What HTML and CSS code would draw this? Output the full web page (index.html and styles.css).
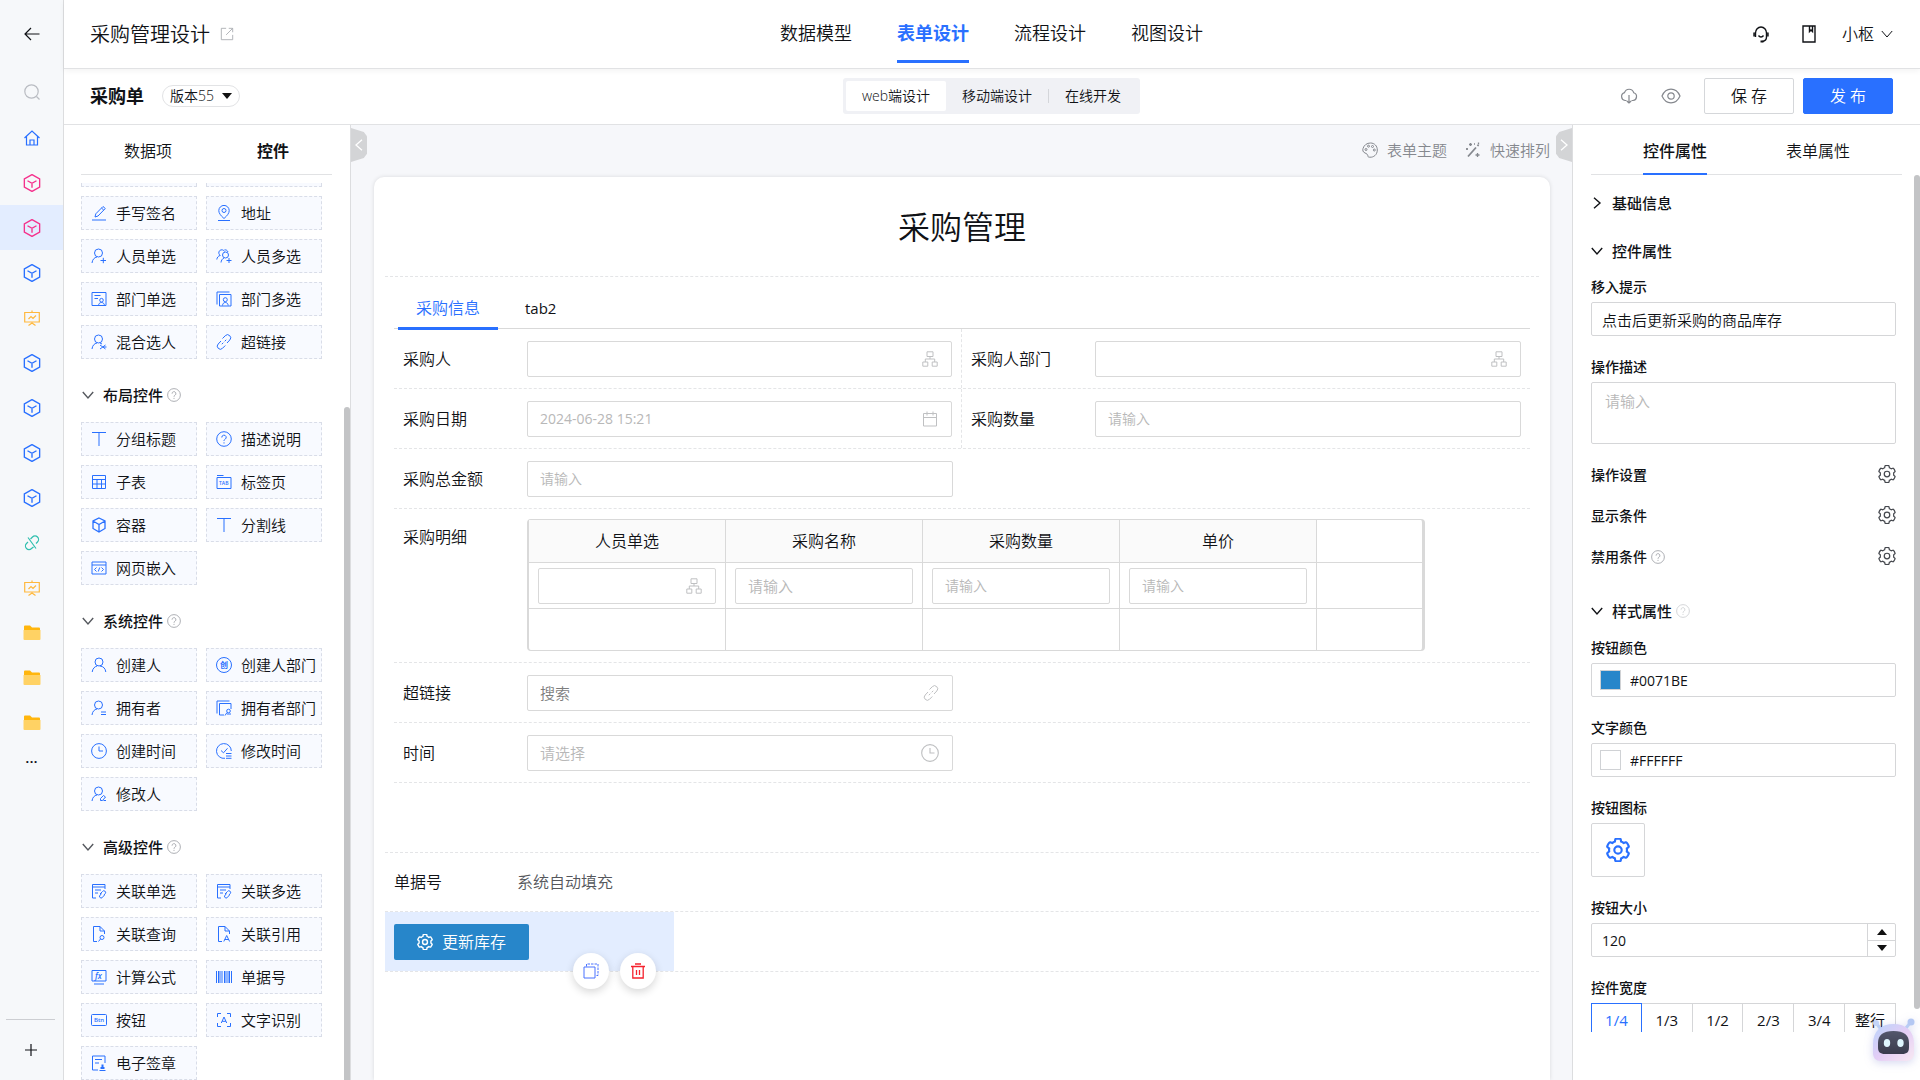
FILE: index.html
```html
<!DOCTYPE html>
<html lang="zh-CN">
<head>
<meta charset="utf-8">
<title>采购管理设计</title>
<link rel="stylesheet" href="styles.css">
</head>
<body>
<svg class="sprite" aria-hidden="true">
  <symbol id="back" viewBox="0 0 16 16"><path d="M15.5 8H1M7 2 1 8l6 6"/></symbol>
  <symbol id="search" viewBox="0 0 16 16"><circle cx="7.5" cy="7.5" r="6.7"/><path d="m12.5 12.5 3 3"/></symbol>
  <symbol id="home" viewBox="0 0 16 16"><path d="M.5 8 8 1l7.500 7M2.500 6.500v8.500h11V6.500M6 15v-5h4v5"/></symbol>
  <symbol id="cube" viewBox="0 0 16 16"><path d="m8 .5 6.800 3.800v7.400L8 15.500l-6.800-3.800V4.300zM4 6l4 2.300L12 6M8 8.300v4"/></symbol>
  <symbol id="board" viewBox="0 0 16 16"><path d="M.7 2.500h14.600v9.500H.7zM8 .5v2M8 12v2M4.500 15.500 8 13l3.500 2.500M4.500 9 7 6.500 9 8.500l3-3"/></symbol>
  <symbol id="unlink" viewBox="0 0 16 16"><path d="M6.500 4 8.500 2a3.400 3.400 0 0 1 5 5L12 8.500M4 7 2.500 8.500a3.400 3.400 0 0 0 5 5L9.500 12M4 2.500l8 11"/></symbol>
  <symbol id="folder" viewBox="0 0 18 16"><path fill="#ffb60d" stroke="none" d="M1 1.500a1 1 0 0 1 1-1h5l2 2h7a1 1 0 0 1 1 1V8H1z"/><path fill="#ffd264" stroke="none" d="M.500 5h17v9a1 1 0 0 1-1 1h-15a1 1 0 0 1-1-1z"/></symbol>
  <symbol id="plus" viewBox="0 0 16 16"><path d="M8 2v12M2 8h12"/></symbol>
  <symbol id="external" viewBox="0 0 16 16"><path d="M7 1.500H1.500v13h13V9M10 1.500h4.500V6M14.500 1.500 7 9"/></symbol>
  <symbol id="headset" viewBox="0 0 18 18"><path d="M3.500 8a5.500 6 0 0 1 11 0M2 7.500v4M16 7.500v4M3.500 7v5M14.500 7v5c0 2.500-1.500 4-4 4.500M6.500 10.500c1.300 2 3.700 2 5 0" /><path d="M8.500 16.500h3" stroke-width="2"/></symbol>
  <symbol id="book" viewBox="0 0 16 18"><path d="M2 1h12v16H2zM8.500 1v5.500l1.500-1.500 1.500 1.500V1"/></symbol>
  <symbol id="down" viewBox="0 0 12 12"><path d="m.8 3 5.200 6 5.200-6"/></symbol>
  <symbol id="right" viewBox="0 0 12 12"><path d="m3 .8 6 5.200-6 5.200"/></symbol>
  <symbol id="left" viewBox="0 0 12 12"><path d="M9 .8 3 6l6 5.200"/></symbol>
  <symbol id="cloud" viewBox="0 0 18 16"><path d="M6.500 12.500H5a4 4 0 0 1-.500-7.800 4.800 4.800 0 0 1 9.200 0 4 4 0 0 1-.7 7.800h-1.500M9 7v8M6.800 13 9 15l2.200-2"/></symbol>
  <symbol id="eye" viewBox="0 0 20 16"><path d="M1 8c2-4.500 5.300-6.800 9-6.800S17 3.500 19 8c-2 4.500-5.300 6.800-9 6.800S3 12.500 1 8z"/><circle cx="10" cy="8" r="3.200"/></symbol>
  <symbol id="palette" viewBox="0 0 16 16"><path d="M6 14.500c0-2-1.500-3-3-3.500C.800 10 .500 8.300 1 6.500 2 3 5 1 8.500 1c4 0 6.800 3 6.800 7 0 5-4 7.500-7.300 7.200-1.200 0-2-.2-2-.7z"/><circle cx="4" cy="7.500" r="1"/><circle cx="6.500" cy="4.200" r="1"/><circle cx="10.500" cy="4.500" r="1"/><circle cx="12.300" cy="8" r="1"/></symbol>
  <symbol id="wand" viewBox="0 0 16 16"><path d="m3 14.500 8-9M12.500 4l1-1.200" stroke-width="1.800"/><path d="M5.500 1v3M4 2.500h3M13.500.500v2M2 6v2M1 7h2M12.500 11v4M10.500 13h4M9 2h1" stroke-width="1.300"/></symbol>
  <symbol id="help" viewBox="0 0 16 16"><circle cx="8" cy="8" r="7.300"/><path d="M5.800 6.500a2.200 2.200 0 1 1 3.400 1.700C8.300 8.800 8 9 8 10M8 11.300v1.200"/></symbol>
  <symbol id="pen" viewBox="0 0 16 16"><path d="M1 15h14M4 12l.8-3.200L12 1.500l2.300 2L7 11zM10.500 3l2.300 2.200"/></symbol>
  <symbol id="pin" viewBox="0 0 16 16"><path d="M2 15.500h12M8 13.500C4.500 10.500 2.800 8 2.800 5.600a5.200 5.200 0 0 1 10.400 0C13.200 8 11.500 10.500 8 13.500z"/><circle cx="8" cy="5.500" r="2"/></symbol>
  <symbol id="user" viewBox="0 0 16 16"><circle cx="8" cy="5" r="4"/><path d="M1.200 15c.4-3.500 2.500-5.500 5-6M9 9c3.500.4 5.400 2.500 5.800 6"/></symbol>
  <symbol id="user-half" viewBox="0 0 16 16"><circle cx="7.500" cy="5" r="4"/><path d="M1 15c.4-3.500 2.300-5.500 5-6"/></symbol>
  <symbol id="user-plus" viewBox="0 0 16 16"><use href="#user-half"/><path d="M9.500 12.500h5.500M12.300 9.800v5.400"/></symbol>
  <symbol id="user-x" viewBox="0 0 16 16"><use href="#user-half"/><path d="m9 11 5.500 4M9 15l5.500-4M9 9l2 1M13 13h2.500"/></symbol>
  <symbol id="user-eq" viewBox="0 0 16 16"><use href="#user-half"/><path d="M10 12h5M10 14.500h5"/></symbol>
  <symbol id="user-edit" viewBox="0 0 16 16"><use href="#user-half"/><path d="m9.500 12.500 3-3 2 1.500-3 3.500h-2zM12.500 14.500h2.500"/></symbol>
  <symbol id="users" viewBox="0 0 16 16"><circle cx="9.500" cy="7" r="3"/><path d="M4.500 7.500a3 3 0 1 1 4-4M.8 11.500c.2-2 1.500-3.500 3.200-4M5 14.500c.2-2 1.200-3.700 3-4.500M8.500 1.800c2 0 3 .7 3.500 2.200M10.500 12.500h5M13 10v5"/></symbol>
  <symbol id="dept" viewBox="0 0 16 16"><path d="M1 1.500h14v13H1zM3.500 4.500h6M3.500 7.500h3.500M7.500 14.500c.2-2 1.300-3 3-3s2.800 1 3 3"/><circle cx="10.500" cy="9.200" r="1.800"/></symbol>
  <symbol id="depts" viewBox="0 0 16 16"><path d="M3.500 3.500H15v11.500H3.500zM1 13.500V1h12.500M6.500 14.500c.2-2 1.200-3 2.800-3s2.700 1 2.900 3"/><circle cx="9.300" cy="8.700" r="2"/></symbol>
  <symbol id="owner-dept" viewBox="0 0 16 16"><path d="M15 9V3.500H3.500V15H8M1 13.500V1h12.500M9 15.500l2-3M11 14h4"/><circle cx="12.500" cy="11" r="1.800"/></symbol>
  <symbol id="link" viewBox="0 0 16 16"><path d="m6.500 4.500 2.800-2.800a3 3 0 0 1 4.500 4.300L11 9M5 7 2.200 10a3 3 0 0 0 4.300 4.300L9.300 11.500M5.800 10.200l1.500-1.500M8.700 7.300l1.500-1.500"/></symbol>
  <symbol id="tee" viewBox="0 0 16 16"><path d="M1 1.500h14M8 1.500V15"/></symbol>
  <symbol id="grid" viewBox="0 0 16 16"><path d="M1.500 1.500h13v13h-13zM1.500 5.500h13M1.500 10h13M6 5.500v9M10.500 5.500v9"/></symbol>
  <symbol id="tab" viewBox="0 0 16 16"><path d="M1 3.500h14v11H1zM1 1.500h6.500"/><text x="3" y="11" font-size="5">TAB</text></symbol>
  <symbol id="box" viewBox="0 0 16 16"><path d="m8 1 6 3v7.500l-6 3.500-6-3.500V4zM2 4l6 3.500L14 4M8 7.500V15" stroke-width="1.300"/></symbol>
  <symbol id="web" viewBox="0 0 16 16"><path d="M1 2h14v12H1zM1 5h14M5.500 7.500l-2 2 2 2M10.500 7.500l2 2-2 2M8.700 7.500l-1.400 4"/></symbol>
  <symbol id="stamp" viewBox="0 0 16 16"><circle cx="8" cy="8" r="7.500"/><text x="4" y="11" font-size="8">创</text></symbol>
  <symbol id="clock" viewBox="0 0 16 16"><circle cx="8" cy="8" r="7.400"/><path d="M8 3.500V8h4"/></symbol>
  <symbol id="clock-edit" viewBox="0 0 16 16"><path d="M9 15.300A7.400 7.400 0 1 1 15.300 8M5 7.500l2.500 2.300 4-4.500M10 10.500h5.500M10 13h5.500M10 15.300h5.500"/></symbol>
  <symbol id="relate" viewBox="0 0 16 16"><path d="M5 15H1.500V1.500h12.500V6M1.500 4h12.500M4 7h6M4 10h3M9 11l2.500-2.500a1.700 1.700 0 0 1 2.800 2L13 12M10.500 10.500 8.500 13a1.700 1.700 0 0 0 2.500 1.800L13.500 12"/></symbol>
  <symbol id="doc-find" viewBox="0 0 16 16"><path d="M6 15.500H2.500v-15H9l4.500 4.500v3M9 .500V5h4.500M7.500 15.500l2-2.500"/><circle cx="11" cy="11.500" r="2"/></symbol>
  <symbol id="doc-a" viewBox="0 0 16 16"><path d="M6 15.500H2.500v-15H9l4.500 4.500v3M9 .500V5h4.500M7.800 15.500l2.900-6 2.900 6M8.700 13.500h4"/></symbol>
  <symbol id="formula" viewBox="0 0 16 16"><path d="M1 1.500h14v10.500H1zM3 15h10"/><text x="4" y="9.500" font-size="8" font-style="italic">fx</text></symbol>
  <symbol id="barcode" viewBox="0 0 16 16"><path d="M.5 2v12M2.500 2v12M4 2v12M6 2v12M8.500 2v12M10 2v12M12 2v12M13.500 2v12M15.500 2v12"/></symbol>
  <symbol id="btn" viewBox="0 0 16 16"><rect x=".5" y="2.500" width="15" height="11" rx="1"/><text x="3" y="10" font-size="6">Btn</text></symbol>
  <symbol id="ocr" viewBox="0 0 16 16"><path d="M1.500 5V1.500H5M11 1.500h3.500V5M14.500 11v3.500H11M5 14.500H1.500V11M5.300 11 8 5l2.700 6M6.200 9.300h3.600"/></symbol>
  <symbol id="seal" viewBox="0 0 16 16"><path d="M14 8V1H1.500v14H7M4 4.500h7M4 8h4M8.500 15.500h6"/><path d="M11.500 9.500v4M9.500 13h4" stroke-width="2"/></symbol>
  <symbol id="org" viewBox="0 0 16 16"><path d="M5 .800h6v4.700H5zM.8 11h5v4.200h-5zM10.200 11h5v4.200h-5zM8 5.500V8M3.300 11V8h9.400v3"/></symbol>
  <symbol id="calendar" viewBox="0 0 16 16"><path d="M1.500 2.500h13v12.500h-13zM1.500 6.500h13M5 .500v4M11 .500v4"/></symbol>
  <symbol id="gear" viewBox="40 40 944 944"><path d="M924.8 625.7l-65.5-56c3.100-19 4.700-38.400 4.700-57.800s-1.600-38.800-4.700-57.800l65.500-56a32 32 0 0 0 9.300-35.200l-.9-2.600a444 444 0 0 0-79.700-137.900l-1.800-2.100a32 32 0 0 0-35.100-9.500l-81.300 28.900c-30-24.600-63.500-44-99.700-57.600l-15.700-85a32 32 0 0 0-25.800-25.700l-2.700-.5c-52.100-9.400-106.900-9.400-159 0l-2.700.5a32 32 0 0 0-25.800 25.700l-15.800 85.400a352 352 0 0 0-99 57.400l-81.900-29.100a32 32 0 0 0-35.100 9.500l-1.800 2.100a446 446 0 0 0-79.700 137.900l-.9 2.600c-4.500 12.500-.8 26.500 9.300 35.200l66.300 56.600c-3.100 18.800-4.600 38-4.600 57.100 0 19.200 1.500 38.400 4.600 57.100L99 625.500a32 32 0 0 0-9.300 35.200l.9 2.600c18.100 50.400 44.900 96.900 79.700 137.900l1.800 2.100a32 32 0 0 0 35.100 9.500l81.900-29.100c29.800 24.500 63.100 43.900 99 57.400l15.800 85.400a32 32 0 0 0 25.800 25.700l2.700.5a449 449 0 0 0 159 0l2.700-.5a32 32 0 0 0 25.800-25.700l15.700-85a350 350 0 0 0 99.700-57.600l81.300 28.900a32 32 0 0 0 35.100-9.500l1.800-2.100c34.800-41.100 61.600-87.500 79.700-137.900l.9-2.600c4.500-12.300.8-26.300-9.300-35z"/><circle cx="512" cy="512" r="145"/></symbol>
  <symbol id="copy" viewBox="0 0 16 16"><path d="M1 4h11v11H1z"/><path d="M3.500 3.500V1h11.500v11.500H12.500" stroke-dasharray="2.500 1"/></symbol>
  <symbol id="trash" viewBox="0 0 16 16"><path d="M1 3.500h14M5 1h6M2.800 3.500V15h10.400V3.500M6.500 7v5M9.500 7v5" stroke-width="1.300"/></symbol>
</svg>

<div class="app">
  <nav class="rail" aria-label="应用导航">
    <a class="rail-back" href="#" aria-label="返回"><svg class="ico"><use href="#back"/></svg></a>
    <a class="rail-search" href="#" aria-label="搜索"><svg class="ico"><use href="#search"/></svg></a>
    <a class="rail-item blue" href="#" aria-label="首页"><svg class="ico"><use href="#home"/></svg></a>
    <a class="rail-item pink" href="#" aria-label="表单"><svg class="ico lg"><use href="#cube"/></svg></a>
    <a class="rail-item pink active" href="#" aria-label="采购单"><svg class="ico lg"><use href="#cube"/></svg></a>
    <a class="rail-item blue" href="#" aria-label="表单"><svg class="ico lg"><use href="#cube"/></svg></a>
    <a class="rail-item yellow" href="#" aria-label="报表"><svg class="ico"><use href="#board"/></svg></a>
    <a class="rail-item blue" href="#" aria-label="表单"><svg class="ico lg"><use href="#cube"/></svg></a>
    <a class="rail-item blue" href="#" aria-label="表单"><svg class="ico lg"><use href="#cube"/></svg></a>
    <a class="rail-item blue" href="#" aria-label="表单"><svg class="ico lg"><use href="#cube"/></svg></a>
    <a class="rail-item blue" href="#" aria-label="表单"><svg class="ico lg"><use href="#cube"/></svg></a>
    <a class="rail-item teal" href="#" aria-label="链接"><svg class="ico"><use href="#unlink"/></svg></a>
    <a class="rail-item yellow" href="#" aria-label="报表"><svg class="ico"><use href="#board"/></svg></a>
    <a class="rail-item" href="#" aria-label="文件夹"><svg class="ico lg"><use href="#folder"/></svg></a>
    <a class="rail-item" href="#" aria-label="文件夹"><svg class="ico lg"><use href="#folder"/></svg></a>
    <a class="rail-item" href="#" aria-label="文件夹"><svg class="ico lg"><use href="#folder"/></svg></a>
    <a class="rail-more" href="#">...</a>
    <button class="rail-add" aria-label="新增"><svg class="ico"><use href="#plus"/></svg></button>
  </nav>

  <div class="main">
    <header class="topbar">
      <div class="brand"><h1>采购管理设计</h1><svg class="ico sm gray"><use href="#external"/></svg></div>
      <nav class="top-tabs">
        <a href="#">数据模型</a><a href="#" class="active">表单设计</a><a href="#">流程设计</a><a href="#">视图设计</a>
      </nav>
      <div class="account">
        <svg class="ico lg bold service"><use href="#headset"/></svg>
        <svg class="ico lg bold"><use href="#book"/></svg>
        <a class="user" href="#">小枢 <svg class="ico xs"><use href="#down"/></svg></a>
      </div>
    </header>

    <div class="subbar">
      <div class="doc"><h2>采购单</h2><button class="version">版本55<i class="caret"></i></button></div>
      <div class="modes">
        <button class="active">web端设计</button><button>移动端设计</button><i></i><button>在线开发</button>
      </div>
      <div class="actions">
        <svg class="ico lg"><use href="#cloud"/></svg>
        <svg class="ico xl"><use href="#eye"/></svg>
        <button class="btn">保 存</button>
        <button class="btn primary">发 布</button>
      </div>
    </div>

    <div class="work">
      <aside class="palette">
        <div class="pane-tabs left"><a href="#">数据项</a><a href="#" class="active">控件</a></div>
        <div class="scroll">
          <div class="tails"><span></span><span></span></div>
          <div class="widgets">
            <button><svg class="ico"><use href="#pen"/></svg>手写签名</button>
            <button><svg class="ico"><use href="#pin"/></svg>地址</button>
            <button><svg class="ico"><use href="#user-plus"/></svg>人员单选</button>
            <button><svg class="ico"><use href="#users"/></svg>人员多选</button>
            <button><svg class="ico"><use href="#dept"/></svg>部门单选</button>
            <button><svg class="ico"><use href="#depts"/></svg>部门多选</button>
            <button><svg class="ico"><use href="#user-x"/></svg>混合选人</button>
            <button><svg class="ico"><use href="#link"/></svg>超链接</button>
          </div>
          <h3><svg class="ico xs"><use href="#down"/></svg>布局控件<svg class="ico sm hint"><use href="#help"/></svg></h3>
          <div class="widgets">
            <button><svg class="ico"><use href="#tee"/></svg>分组标题</button>
            <button><svg class="ico"><use href="#help"/></svg>描述说明</button>
            <button><svg class="ico"><use href="#grid"/></svg>子表</button>
            <button><svg class="ico"><use href="#tab"/></svg>标签页</button>
            <button><svg class="ico"><use href="#box"/></svg>容器</button>
            <button><svg class="ico"><use href="#tee"/></svg>分割线</button>
            <button><svg class="ico"><use href="#web"/></svg>网页嵌入</button>
          </div>
          <h3><svg class="ico xs"><use href="#down"/></svg>系统控件<svg class="ico sm hint"><use href="#help"/></svg></h3>
          <div class="widgets">
            <button><svg class="ico"><use href="#user"/></svg>创建人</button>
            <button><svg class="ico"><use href="#stamp"/></svg>创建人部门</button>
            <button><svg class="ico"><use href="#user-eq"/></svg>拥有者</button>
            <button><svg class="ico"><use href="#owner-dept"/></svg>拥有者部门</button>
            <button><svg class="ico"><use href="#clock"/></svg>创建时间</button>
            <button><svg class="ico"><use href="#clock-edit"/></svg>修改时间</button>
            <button><svg class="ico"><use href="#user-edit"/></svg>修改人</button>
          </div>
          <h3><svg class="ico xs"><use href="#down"/></svg>高级控件<svg class="ico sm hint"><use href="#help"/></svg></h3>
          <div class="widgets">
            <button><svg class="ico"><use href="#relate"/></svg>关联单选</button>
            <button><svg class="ico"><use href="#relate"/></svg>关联多选</button>
            <button><svg class="ico"><use href="#doc-find"/></svg>关联查询</button>
            <button><svg class="ico"><use href="#doc-a"/></svg>关联引用</button>
            <button><svg class="ico"><use href="#formula"/></svg>计算公式</button>
            <button><svg class="ico"><use href="#barcode"/></svg>单据号</button>
            <button><svg class="ico"><use href="#btn"/></svg>按钮</button>
            <button><svg class="ico"><use href="#ocr"/></svg>文字识别</button>
            <button><svg class="ico"><use href="#seal"/></svg>电子签章</button>
          </div>
        </div>
        <i class="bar bar-left"></i>
      </aside>

      <main class="stage">
        <button class="fold fold-left" aria-label="收起左栏"><svg class="ico xs"><use href="#left"/></svg></button>
        <button class="fold fold-right" aria-label="收起右栏"><svg class="ico xs"><use href="#right"/></svg></button>
        <div class="tools">
          <a href="#"><svg class="ico"><use href="#palette"/></svg>表单主题</a>
          <a href="#"><svg class="ico"><use href="#wand"/></svg>快速排列</a>
        </div>
        <form class="card">
          <h2 class="form-title">采购管理</h2>
          <section class="tab-block">
            <div class="form-tabs"><a href="#" class="active">采购信息</a><a href="#" class="latin">tab2</a></div>
            <div class="row two">
              <div class="cell"><label for="buyer">采购人</label><span class="field"><input id="buyer"><svg class="ico"><use href="#org"/></svg></span></div>
              <div class="cell"><label for="dept-in">采购人部门</label><span class="field"><input id="dept-in"><svg class="ico"><use href="#org"/></svg></span></div>
            </div>
            <div class="row two">
              <div class="cell"><label for="date">采购日期</label><span class="field"><input id="date" class="latin" placeholder="2024-06-28 15:21"><svg class="ico"><use href="#calendar"/></svg></span></div>
              <div class="cell"><label for="qty">采购数量</label><span class="field"><input id="qty" placeholder="请输入"></span></div>
            </div>
            <div class="row two open">
              <div class="cell"><label for="total">采购总金额</label><span class="field"><input id="total" placeholder="请输入"></span></div>
            </div>
            <div class="row detail">
              <span class="label">采购明细</span>
              <table>
                <thead><tr><th>人员单选</th><th>采购名称</th><th>采购数量</th><th>单价</th><td></td></tr></thead>
                <tbody>
                  <tr>
                    <td><span class="field"><input aria-label="人员单选"><svg class="ico"><use href="#org"/></svg></span></td>
                    <td><span class="field"><input class="md" aria-label="采购名称" placeholder="请输入"></span></td>
                    <td><span class="field"><input aria-label="采购数量" placeholder="请输入"></span></td>
                    <td><span class="field"><input aria-label="单价" placeholder="请输入"></span></td>
                    <td></td>
                  </tr>
                  <tr class="blank"><td></td><td></td><td></td><td></td><td></td></tr>
                </tbody>
              </table>
            </div>
            <div class="row two open">
              <div class="cell"><label for="url">超链接</label><span class="field"><input id="url" class="md dark" placeholder="搜索"><svg class="ico"><use href="#link"/></svg></span></div>
            </div>
            <div class="row two open">
              <div class="cell"><label for="time">时间</label><span class="field"><input id="time" class="md" placeholder="请选择"><svg class="ico lg"><use href="#clock"/></svg></span></div>
            </div>
          </section>
          <div class="serial"><span class="label">单据号</span><span class="auto">系统自动填充</span></div>
          <div class="button-row">
            <div class="selected">
              <button type="button" class="update"><svg class="ico"><use href="#gear"/></svg>更新库存</button>
              <div class="float">
                <button type="button" class="dup" aria-label="复制"><svg class="ico"><use href="#copy"/></svg></button>
                <button type="button" class="del" aria-label="删除"><svg class="ico"><use href="#trash"/></svg></button>
              </div>
            </div>
          </div>
        </form>
      </main>

      <aside class="props">
        <div class="pane-tabs right"><a href="#" class="active line">控件属性</a><a href="#">表单属性</a></div>
        <div class="prop-body">
          <h3><svg class="ico xs"><use href="#right"/></svg>基础信息</h3>
          <h3 class="open"><svg class="ico xs"><use href="#down"/></svg>控件属性</h3>
          <div class="prop"><label for="tip">移入提示</label><input id="tip" value="点击后更新采购的商品库存"></div>
          <div class="prop"><label for="desc">操作描述</label><textarea id="desc" placeholder="请输入"></textarea></div>
          <div class="prop inline"><span>操作设置</span><button aria-label="操作设置"><svg class="ico lg gear"><use href="#gear"/></svg></button></div>
          <div class="prop inline"><span>显示条件</span><button aria-label="显示条件"><svg class="ico lg gear"><use href="#gear"/></svg></button></div>
          <div class="prop inline"><span>禁用条件<svg class="ico sm hint"><use href="#help"/></svg></span><button aria-label="禁用条件"><svg class="ico lg gear"><use href="#gear"/></svg></button></div>
          <h3 class="open style"><svg class="ico xs"><use href="#down"/></svg>样式属性<svg class="ico sm hint light"><use href="#help"/></svg></h3>
          <div class="prop"><label for="c1">按钮颜色</label><span class="color"><i class="swatch blue-bg"></i><input id="c1" value="#0071BE"></span></div>
          <div class="prop"><label for="c2">文字颜色</label><span class="color"><i class="swatch"></i><input id="c2" value="#FFFFFF"></span></div>
          <div class="prop"><span>按钮图标</span><button class="icon-pick" aria-label="选择图标"><svg class="ico huge gear"><use href="#gear"/></svg></button></div>
          <div class="prop"><label for="size">按钮大小</label><span class="stepper"><input id="size" value="120"><span class="steps"><button aria-label="增加"><i class="caret up"></i></button><button aria-label="减少"><i class="caret"></i></button></span></span></div>
          <div class="prop last"><span>控件宽度</span><div class="widths"><button class="active">1/4</button><button>1/3</button><button>1/2</button><button>2/3</button><button>3/4</button><button>整行</button></div></div>
        </div>
        <i class="bar bar-right"></i>
        <button class="robot" aria-label="智能助手">
          <svg viewBox="0 0 44 46">
            <defs><linearGradient id="shell" x1="0" y1="0" x2="1" y2="1"><stop offset="0" stop-color="#b9d4fb"/><stop offset=".5" stop-color="#e3cdf6"/><stop offset="1" stop-color="#f8e9f2"/></linearGradient>
            <linearGradient id="face" x1="0" y1="0" x2="0" y2="1"><stop offset="0" stop-color="#53566b"/><stop offset="1" stop-color="#3a3c4e"/></linearGradient></defs>
            <path d="m8 10-4-5M34 10l4-5" stroke="#b9cdf5" stroke-width="3" stroke-linecap="round"/>
            <circle cx="4" cy="5" r="3" fill="#c3d4f8"/><circle cx="39" cy="4" r="3.500" fill="#b4c8f3"/>
            <path d="M1 26C1 13 9 6 21.500 6S42 13 42 26v9c0 5-3 8-8 8H9c-5 0-8-3-8-8z" fill="url(#shell)"/>
            <path d="M6 25c0-8 5-12 15.500-12S37 17 37 25v4c0 5-2 7-7 7H13c-5 0-7-2-7-7z" fill="url(#face)"/>
            <ellipse cx="15" cy="25" rx="3.200" ry="4" fill="#dff6ff"/><ellipse cx="28.500" cy="25" rx="3.200" ry="4" fill="#dff6ff"/>
          </svg>
        </button>
      </aside>
    </div>
  </div>
</div>
</body>
</html>
```
FILE: styles.css
```css
:root {
  --blue: #2970ff;
  --line: #e1e2e4;
  --field: #d9d9d9;
  --ink: #101216;
}
* { box-sizing: border-box; }
body {
  margin: 0;
  color: var(--ink);
  font: 350 15px/22px "Open Sans", "Noto Sans CJK SC", sans-serif;
}
h1, h2, h3 { margin: 0; }
a { color: inherit; text-decoration: none; }
button, input, textarea { font: inherit; color: inherit; margin: 0; }
button { background: none; border: 0; padding: 0; cursor: pointer; }
.sprite { display: none; }

.ico { width: 16px; height: 16px; flex: none; fill: none; stroke: currentColor; stroke-width: 1; }
.ico.xs { width: 12px; height: 12px; }
.ico.sm { width: 14px; height: 14px; }
.ico.lg { width: 18px; height: 18px; }
.ico.xl { width: 20px; height: 16px; }
.ico.huge { width: 24px; height: 24px; }
.ico.bold { stroke-width: 1.4; }
.ico.gray { color: #a8abb0; }
.ico.gear { stroke-width: 64; }
symbol text { fill: currentColor; stroke: none; font-weight: 600; }

.app { display: flex; height: 100vh; min-height: 900px; overflow: hidden; }

/* navigation rail */
.rail {
  flex: none;
  width: 64px;
  display: flex;
  flex-direction: column;
  background: #f6f8fa;
  border-right: 1px solid #dcdddf;
}
.rail .ico { stroke-width: 1.2; }
.rail > a { display: flex; align-items: center; justify-content: center; height: 45px; flex: none; }
.rail > .rail-back { height: 68px; }
.rail > .rail-search { height: 47px; color: #b9bcc2; }
.rail > .rail-more { align-items: flex-start; height: 30px; line-height: 24px; font-weight: 600; }
.rail-item.active { background: #e3edff; }
.blue { color: var(--blue); }
.pink { color: #f5318c; }
.yellow { color: #ffb83d; }
.teal { color: #2fbfae; }
.rail-add {
  margin: auto 8px 0 6px;
  height: 61px;
  border-top: 1px solid #ccced2;
  display: flex;
  align-items: center;
  justify-content: center;
}

/* top bars */
.main { flex: 1; min-width: 0; display: flex; flex-direction: column; }
.topbar, .subbar {
  display: grid;
  grid-template-columns: 1fr auto 1fr;
  align-items: center;
  padding: 0 27px 0 26px;
  border-bottom: 1px solid var(--line);
  flex: none;
}
.topbar { height: 69px; box-shadow: 0 2px 6px rgba(0, 0, 0, .05); z-index: 1; }
.subbar { height: 56px; padding-bottom: 2px; }
.brand { display: flex; align-items: center; gap: 10px; }
.brand h1 { padding-top: 2px; font-size: 20px; font-weight: inherit; line-height: 30px; }
.top-tabs { display: flex; gap: 45px; align-self: stretch; font-size: 18px; }
.top-tabs a { height: 63px; line-height: 66px; }
.top-tabs .active { color: var(--blue); font-weight: 700; border-bottom: 3px solid var(--blue); }
.account { display: flex; align-items: center; justify-content: flex-end; gap: 24px; }
.service { margin-right: 6px; }
.user { display: flex; align-items: center; gap: 7px; font-size: 16px; }

.doc { display: flex; align-items: center; gap: 18px; }
.doc h2 { font-size: 18px; font-weight: 700; }
.version {
  display: flex;
  align-items: center;
  gap: 8px;
  height: 22px;
  padding: 0 7px;
  border: 1px solid #e2e3e5;
  border-radius: 11px;
  font-size: 14px;
  line-height: 20px;
}
.caret { width: 0; height: 0; border: 5px solid transparent; border-top: 6px solid #111; border-bottom: 0; }
.caret.up { border-top: 0; border-bottom: 6px solid #111; }
.modes {
  display: flex;
  align-items: center;
  height: 36px;
  padding: 3px;
  border-radius: 3px;
  background: #f0f1f5;
  font-size: 14px;
}
.modes button { height: 30px; padding: 0 16px; border-radius: 2px; }
.modes .active { background: #fff; }
.modes i { width: 1px; height: 14px; background: #d4d6da; }
.actions { display: flex; align-items: center; justify-content: flex-end; color: #85888e; }
.actions .ico { margin-right: 23px; stroke-width: 1.2; }
.btn {
  width: 90px;
  height: 36px;
  border: 1px solid #d5d7da;
  border-radius: 2px;
  color: var(--ink);
  font-size: 16px;
  margin-left: 9px;
}
.ico + .btn { margin-left: 0; }
.btn.primary { background: var(--blue); border-color: var(--blue); color: #fff; }

/* workspace */
.work { flex: 1; min-height: 0; display: flex; }
.pane-tabs { display: flex; justify-content: center; height: 50px; font-size: 16px; line-height: 52px; border-bottom: 1px solid var(--line); flex: none; }
.pane-tabs .active { font-weight: 700; }
.pane-tabs.left { gap: 85px; margin: 0 18px 0 17px; }
.pane-tabs.right { gap: 79px; margin: 0 18px; }
.pane-tabs .line { font-weight: 500; height: 50px; border-bottom: 2px solid var(--blue); }
.bar { position: absolute; width: 6px; border-radius: 3px; background: #c3c4c6; }
.bar-left { right: 0; top: 282px; bottom: 0; border-radius: 3px 3px 0 0; }
.bar-right { right: 0; top: 50px; bottom: 71px; }

.palette { position: relative; flex: none; width: 287px; display: flex; flex-direction: column; border-right: 1px solid #dcdddf; }
.scroll { margin: 8px 28px 0 17px; overflow: hidden; }
.tails, .widgets { display: grid; grid-template-columns: 116px 116px; gap: 9px; }
.tails { margin-bottom: 9px; }
.tails span { height: 4px; border: 1px dashed #d9dde8; border-top: 0; background: #f8faff; }
.widgets button {
  display: flex;
  align-items: center;
  gap: 9px;
  height: 34px;
  padding-left: 9px;
  border: 1px dashed #d9dde8;
  background: #f8faff;
  white-space: nowrap;
}
.widgets .ico { color: var(--blue); }
.palette h3 { display: flex; align-items: center; gap: 4px; margin: 25px 0 16px 1px; font-size: 15px; font-weight: 500; line-height: 22px; }
.palette h3 .xs { margin-right: 5px; color: #55585e; stroke-width: 1.4; }
.hint { color: #a2a5aa; }
.hint.light { color: #cfd1d4; }

.stage { position: relative; flex: 1; min-width: 0; padding: 0 22px 0 23px; background: #f6f7fa; display: flex; flex-direction: column; }
.tools { display: flex; justify-content: flex-end; align-items: center; gap: 18px; height: 50px; margin-bottom: 2px; color: #85888e; flex: none; }
.tools a { display: flex; align-items: center; gap: 9px; }
.fold {
  position: absolute;
  top: 3px;
  width: 16px;
  height: 34px;
  display: flex;
  align-items: center;
  justify-content: center;
  background: #d3d4d6;
  color: #fff;
}
.fold .ico { stroke-width: 1.3; }
.fold-left { left: 0; clip-path: polygon(0 0, 80% 12%, 100% 24%, 100% 76%, 80% 88%, 0 100%); }
.fold-right { right: 0; clip-path: polygon(100% 0, 20% 12%, 0 24%, 0 76%, 20% 88%, 100% 100%); }
.card {
  flex: 1;
  padding: 0 11px;
  background: #fff;
  border-radius: 10px 10px 0 0;
  box-shadow: 0 0 4px rgba(0, 0, 0, .12);
}
.form-title { height: 100px; line-height: 100px; text-align: center; font-size: 32px; font-weight: inherit; border-bottom: 1px dashed #e4e5e7; }
.tab-block { padding: 0 9px 69px; border-bottom: 1px dashed #e4e5e7; }
.form-tabs { display: flex; gap: 9px; padding-left: 4px; height: 52px; border-bottom: 1px solid var(--field); font-size: 16px; line-height: 62px; }
.form-tabs a { height: 53px; padding: 0 18px; }
.form-tabs .active { color: var(--blue); border-bottom: 3px solid var(--blue); }
.form-tabs .latin { font-size: 15px; }
.latin { font-weight: 400; }
.row { border-bottom: 1px dashed #e4e5e7; font-size: 16px; }
.row.two { display: grid; grid-template-columns: 1fr 1fr; height: 60px; }
.cell { display: flex; align-items: center; padding: 0 9px; }
.two:not(.open) .cell:first-child { border-right: 1px dashed #e4e5e7; }
.cell label { width: 124px; flex: none; }
.field { position: relative; display: block; flex: 1; }
.field input { display: block; width: 100%; height: 36px; padding: 0 12px; border: 1px solid var(--field); border-radius: 2px; font-size: 14px; background: #fff; }
.field input.md { font-size: 15px; }
.field .ico { position: absolute; right: 14px; top: 0; bottom: 0; margin: auto 0; color: #bfc0c2; }
::placeholder { color: #b8b8b8; opacity: 1; }
.dark::placeholder { color: #7d7d7d; }

.row.detail { display: flex; align-items: flex-start; height: 154px; padding: 10px 105px 0 9px; }
.detail .label { width: 124px; flex: none; line-height: 36px; }
table { flex: 1; table-layout: fixed; border-collapse: separate; border-spacing: 0; border: 1px solid var(--field); border-left-width: 2px; border-right-width: 3px; border-radius: 4px; }
th, td { height: 46px; padding: 0 9px; border-right: 1px solid var(--field); border-bottom: 1px solid var(--field); }
th { width: 197px; font-weight: inherit; background: #fafafa; }
thead th, thead td { height: 43px; }
.blank td { height: 41px; border-bottom: 0; }
th:last-child, td:last-child { border-right: 0; }

.serial { display: flex; align-items: center; height: 59px; padding: 0 9px; font-size: 16px; border-bottom: 1px dashed #e4e5e7; }
.serial .label { width: 123px; }
.auto { color: #55575c; }
.button-row { height: 60px; border-bottom: 1px dashed #e4e5e7; }
.selected { position: relative; width: 25%; height: 59px; display: flex; align-items: center; padding: 0 9px; background: #e3edff; }
.update {
  display: flex;
  align-items: center;
  justify-content: center;
  gap: 9px;
  width: 135px;
  height: 36px;
  border-radius: 2px;
  background: #2786ca;
  color: #fff;
  font-size: 16px;
}
.update .ico { stroke-width: 84; }
.float { position: absolute; right: 18px; bottom: -18px; display: flex; gap: 11px; }
.float button { width: 36px; height: 36px; border-radius: 50%; background: #fff; box-shadow: 0 3px 8px rgba(0, 0, 0, .16); display: flex; align-items: center; justify-content: center; }
.dup { color: #4b73ff; }
.del { color: #f5222d; }

/* properties */
.props { position: relative; flex: none; width: 348px; border-left: 1px solid #dcdddf; display: flex; flex-direction: column; background: #fff; }
.prop-body { flex: 1; min-height: 0; margin: 0 24px 48px 18px; padding-top: 17px; overflow: hidden; }
.props h3 { display: flex; align-items: center; gap: 4px; font-size: 15px; font-weight: 500; line-height: 22px; margin-bottom: 26px; }
.props h3 .xs { margin-right: 5px; stroke-width: 1.4; }
.props h3.open { margin-bottom: 15px; }
.props h3.style { margin: 33px 0 16px; }
.prop { display: flex; flex-direction: column; gap: 5px; margin-bottom: 21px; font-size: 14px; font-weight: 500; line-height: 20px; }
.prop.inline { flex-direction: row; align-items: flex-start; justify-content: space-between; height: 20px; }
.prop.inline span { display: flex; align-items: center; gap: 4px; }
.prop input, .prop textarea { width: 100%; height: 34px; padding: 0 10px; border: 1px solid #d5d6d8; border-radius: 2px; font-size: 15px; font-weight: 350; background: #fff; }
.prop textarea { display: block; height: 62px; padding: 8px 13px; resize: none; }
.prop.inline button { display: flex; color: #44474d; }
.color, .stepper { display: flex; align-items: center; height: 34px; border: 1px solid #d5d6d8; border-radius: 2px; }
.color { padding-left: 8px; gap: 9px; }
.prop .color input, .prop .stepper input { height: 30px; border: 0; padding: 0; flex: 1; min-width: 0; font-size: 14px; font-weight: 400; }
.prop .stepper input { padding-left: 10px; }
.swatch { width: 21px; height: 20px; border: 1px solid #d0d2d5; }
.blue-bg { background: #2786ca; }
.icon-pick { width: 54px; height: 54px; border: 1px solid #d5d6d8; border-radius: 2px; color: var(--blue); display: flex; align-items: center; justify-content: center; }
.icon-pick .ico { stroke-width: 84; }
.steps { display: flex; flex-direction: column; width: 28px; height: 32px; border-left: 1px solid #d5d6d8; }
.steps button { flex: 1; display: flex; align-items: center; justify-content: center; }
.steps button + button { border-top: 1px solid #d5d6d8; }
.widths { display: grid; grid-template-columns: repeat(6, 1fr); }
.widths button { height: 34px; border: 1px solid #d5d6d8; border-left: 0; font-size: 15px; font-weight: 400; }
.widths .active { border: 1px solid var(--blue); color: var(--blue); }
.robot { position: absolute; right: 4px; bottom: 16px; width: 44px; height: 46px; filter: drop-shadow(0 2px 4px rgba(90, 100, 200, .25)); }
```
